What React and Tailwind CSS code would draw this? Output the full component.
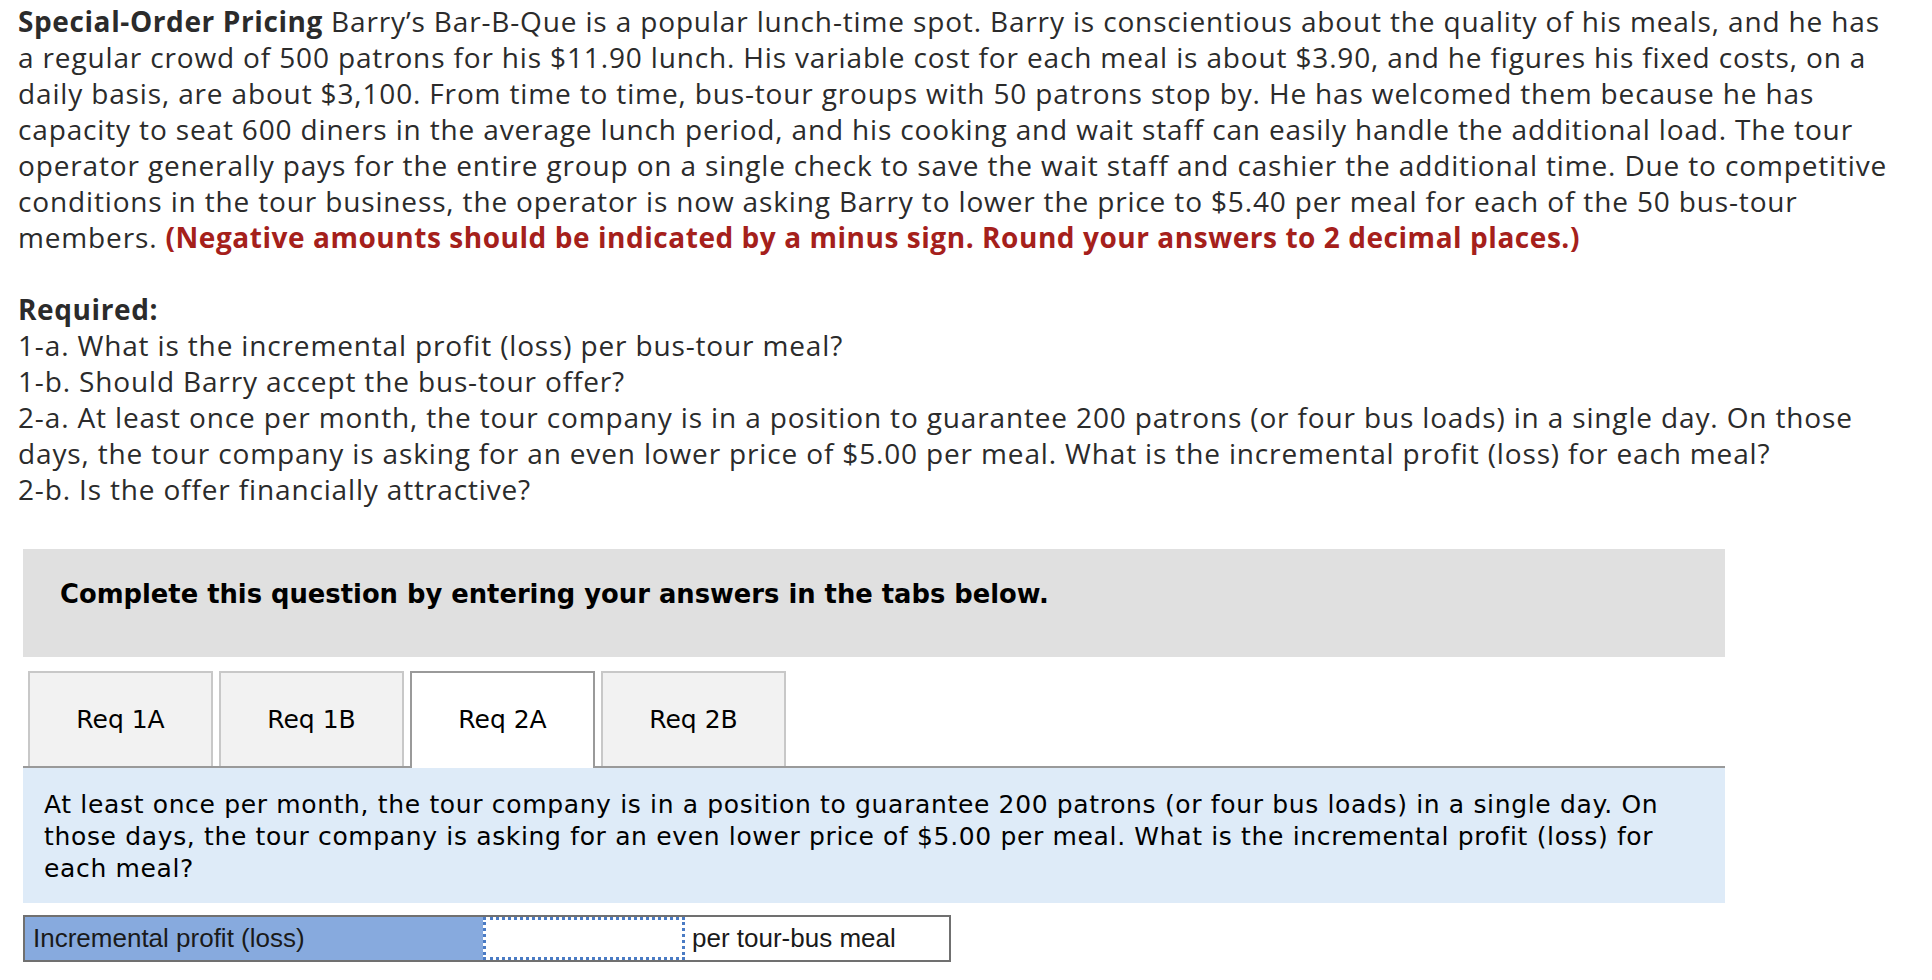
export default function App() {
  const body = "font-['Open_Sans','Liberation_Sans',sans-serif] text-[28px] leading-[36px] tracking-[0.85px] text-[#2b2b2b] whitespace-nowrap";
  const tabs = ["Req 1A", "Req 1B", "Req 2A", "Req 2B"];
  const active = 2;

  return (
    <div className="min-h-screen bg-white pl-[18px] pt-[3px]">
      <p className={body}>
        <b className="font-bold tracking-[0.6px]">Special-Order Pricing</b> Barry’s Bar-B-Que is a popular lunch-time spot. Barry is conscientious about the quality of his meals, and he has
        <br />a regular crowd of 500 patrons for his $11.90 lunch. His variable cost for each meal is about $3.90, and he figures his fixed costs, on a
        <br />daily basis, are about $3,100. From time to time, bus-tour groups with 50 patrons stop by. He has welcomed them because he has
        <br />capacity to seat 600 diners in the average lunch period, and his cooking and wait staff can easily handle the additional load. The tour
        <br />operator generally pays for the entire group on a single check to save the wait staff and cashier the additional time. Due to competitive
        <br />conditions in the tour business, the operator is now asking Barry to lower the price to $5.40 per meal for each of the 50 bus-tour
        <br />members.{" "}
        <b className="font-bold tracking-[0.55px] text-[#a5201b]">(Negative amounts should be indicated by a minus sign. Round your answers to 2 decimal places.)</b>
      </p>

      <div className={`mt-[36px] ${body}`}>
        <p className="font-bold tracking-[0.6px]">Required:</p>
        <p>1-a. What is the incremental profit (loss) per bus-tour meal?</p>
        <p>1-b. Should Barry accept the bus-tour offer?</p>
        <p>
          2-a. At least once per month, the tour company is in a position to guarantee 200 patrons (or four bus loads) in a single day. On those
          <br />days, the tour company is asking for an even lower price of $5.00 per meal. What is the incremental profit (loss) for each meal?
        </p>
        <p>2-b. Is the offer financially attractive?</p>
      </div>

      <div className="ml-[5px] mt-[42px] w-[1702px] font-['DejaVu_Sans','Verdana',sans-serif] text-black">
        <div className="h-[108px] bg-[#e0e0e0] pl-[37px] pt-[30px] text-[25.8px] font-bold leading-[30px]">
          Complete this question by entering your answers in the tabs below.
        </div>

        <div className="mt-[14px] flex items-start gap-[6px] border-b-2 border-[#9a9a9a] pl-[5px]">
          {tabs.map((t, i) =>
            i === active ? (
              <div
                key={t}
                className="relative -mb-[2px] flex h-[97px] w-[185px] items-center justify-center border-2 border-b-0 border-[#9a9a9a] bg-white pb-[2px] text-[25px]"
              >
                {t}
              </div>
            ) : (
              <div
                key={t}
                className="flex h-[95px] w-[185px] items-center justify-center border-2 border-b-0 border-[#c8c8c8] bg-[#f2f2f2] text-[25px]"
              >
                {t}
              </div>
            )
          )}
        </div>

        <div className="bg-[#deebf8] px-[21px] pb-[18px] pt-[21px] text-[25px] leading-[32px] tracking-[0.65px] whitespace-nowrap">
          At least once per month, the tour company is in a position to guarantee 200 patrons (or four bus loads) in a single day. On
          <br />those days, the tour company is asking for an even lower price of $5.00 per meal. What is the incremental profit (loss) for
          <br />each meal?
        </div>

        <div className="mt-[12px] flex h-[47px] w-[928px] border-2 border-[#707070] font-['Liberation_Sans',Arial,sans-serif] text-[26px] text-[#1a1a1a]">
          <div className="flex w-[458px] items-center bg-[#87aade] pl-[8px]">Incremental profit (loss)</div>
          <input
            aria-label="Incremental profit (loss)"
            className="h-full w-[202px] border-[3px] border-dotted border-[#4a7bc4] bg-white outline-none"
          />
          <div className="flex flex-1 items-center bg-white pl-[7px]">per tour-bus meal</div>
        </div>
      </div>
    </div>
  );
}
